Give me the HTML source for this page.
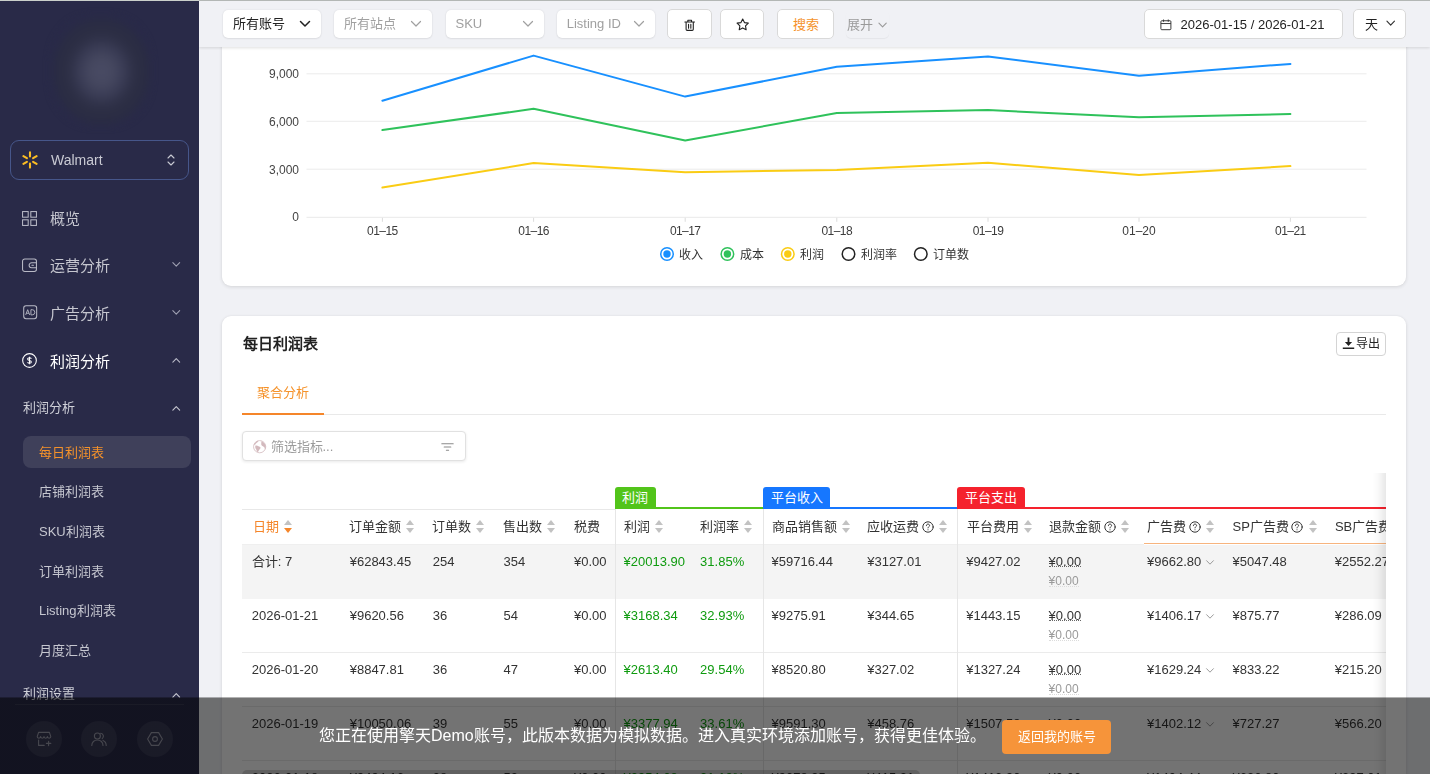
<!DOCTYPE html>
<html lang="zh-CN">
<head>
<meta charset="utf-8">
<title>每日利润表</title>
<style>
*{box-sizing:border-box;margin:0;padding:0}
html,body{width:1430px;height:774px;overflow:hidden}
body{position:relative;background:#f0f1f5;font-family:"Liberation Sans",sans-serif;font-size:13px;color:#333;-webkit-font-smoothing:antialiased;opacity:.999}
.abs{position:absolute}
svg{display:block;overflow:visible}
/* top hairline */
#topline{position:absolute;left:0;top:0;width:1430px;height:1px;background:linear-gradient(to right,#cbd0cb 0,#cbd0cb 199px,#b3b7b5 199px,#b3b7b5 100%);z-index:60}
/* ---------- sidebar ---------- */
#side{position:absolute;left:0;top:0;width:199px;height:774px;background:#292a48;z-index:20;overflow:hidden}
#logo{position:absolute;left:50px;top:15px;width:101px;height:111px;border-radius:42%;background:radial-gradient(ellipse 50% 50% at 51% 51%,#494b64 0%,#45475f 24%,#3a3c55 44%,#2f3148 62%,#2b2d43 78%,#2a2c44 92%,#292a48 100%);filter:blur(3px)}
#shop{position:absolute;left:10px;top:140px;width:179px;height:40px;border:1px solid #46568a;border-radius:9px}
#shop .nm{position:absolute;left:40px;top:0;line-height:39px;font-size:14px;color:#c9cad3}
.mi{position:absolute;left:0;width:199px;height:48px}
.mi .tx{position:absolute;left:50px;top:1px;line-height:48px;font-size:15px;color:#c6c7d0;letter-spacing:0}
.mi .ic{position:absolute;left:22px;top:17px;width:15px;height:15px}
.mi .ch{position:absolute;left:171.700px;top:20.300px;width:8.500px;height:6.800px}
.mi.on .tx{color:#fff;font-weight:500}
.sh{position:absolute;left:23px;font-size:13px;line-height:20px;color:#cfd0d8}
.si{position:absolute;left:39px;font-size:13px;line-height:20px;color:#c6c7d0}
#act{position:absolute;left:23px;top:436px;width:168px;height:32px;border-radius:8px;background:#3f405a}
.rb{position:absolute;top:721px;width:36px;height:36px;border-radius:50%;background:#3a3b57}
/* ---------- toolbar ---------- */
#bar{position:absolute;left:199px;top:0;width:1231px;height:47px;background:#f0f1f5;box-shadow:0 1px 3px rgba(0,0,0,.13);z-index:10}
.sel{position:absolute;top:10px;height:28px;width:98px;background:#fff;border-radius:5px;box-shadow:0 0 2px rgba(0,0,0,.10),0 1px 2px rgba(0,0,0,.06);font-size:13px;line-height:28px;color:#a0a0a0;padding-left:10px;white-space:nowrap}
.sel svg{position:absolute;right:10px;top:10px}
.btn{position:absolute;top:9px;height:30px;background:#fff;border:1px solid #d9d9d9;border-radius:5px;font-size:13px;line-height:29.500px;text-align:center;white-space:nowrap}
/* ---------- cards ---------- */
.card{position:absolute;left:222px;width:1184px;background:#fff;border-radius:9px;box-shadow:0 1px 4px rgba(0,0,0,.12),0 0 2px rgba(0,0,0,.06)}
#c1{top:-40px;height:326px}
#c2{top:316px;height:520px}
/* ---------- overlay ---------- */
#ov{position:absolute;left:0;top:697px;width:1430px;height:77px;background:linear-gradient(to bottom,rgba(0,0,0,.30) 0,rgba(0,0,0,.30) 1px,rgba(0,0,0,.55) 1px,rgba(0,0,0,.55) 100%);z-index:50}
#ov .t{position:absolute;left:319px;top:26px;font-size:16px;line-height:26px;color:#fff;white-space:nowrap}
#ov .b{position:absolute;left:1002px;top:23px;width:109px;height:34px;border-radius:4px;background:#f6943a;color:#fff;font-size:13px;line-height:34px;text-align:center}
.j{display:inline-block;white-space:nowrap;text-align:justify;text-align-last:justify}
</style>
</head>
<body>
<div id="topline"></div>

<!-- SIDEBAR -->
<div id="side">
  <div id="logo"></div>
  <div id="shop">
    <svg class="abs" style="left:10px;top:10px" width="18" height="18" viewBox="-9 -9 18 18" fill="none" stroke="#fbbd23" stroke-width="2.1" stroke-linecap="round">
      <path d="M0 -3.6V-7.6M0 3.6V7.6M3.1 -1.8L6.6 -3.8M3.1 1.8L6.6 3.8M-3.1 -1.8L-6.6 -3.8M-3.1 1.8L-6.6 3.8"/>
    </svg>
    <span class="nm">Walmart</span>
    <svg class="abs" style="left:156px;top:13px" width="8" height="12" viewBox="0 0 8 12" fill="none" stroke="#c9cad3" stroke-width="1.1" stroke-linecap="round" stroke-linejoin="round"><path d="M1 4L4 1L7 4M1 8L4 11L7 8"/></svg>
  </div>

  <div class="mi" style="top:194px">
    <svg class="ic" viewBox="0 0 16 16" fill="none" stroke="#b9bac6" stroke-width="1.100"><rect x="0.6" y="0.6" width="6" height="6"/><rect x="9.4" y="0.6" width="6" height="6"/><rect x="0.6" y="9.4" width="6" height="6"/><rect x="9.4" y="9.4" width="6" height="6"/></svg>
    <span class="tx"><span class="j" style="width:30.00px">概览</span></span>
  </div>
  <div class="mi" style="top:241px">
    <svg class="ic" viewBox="0 0 15 15" fill="none" stroke="#b9bac6" stroke-width="1.050" stroke-linejoin="round" stroke-linecap="round"><rect x=".55" y="1" width="13.900" height="12.500" rx="2.200"/><path d="M14.450 4.800H9.600a2.500 2.500 0 0 0 0 5h4.850"/><path d="M9.900 7.300h1.500"/></svg>
    <span class="tx"><span class="j" style="width:60.00px">运营分析</span></span>
    <svg class="ch" viewBox="0 0 10 8" fill="none" stroke="#9fa0b2" stroke-width="1.3" stroke-linecap="round" stroke-linejoin="round"><path d="M1 2L5 6L9 2"/></svg>
  </div>
  <div class="mi" style="top:289px">
    <svg class="ic" style="top:16.300px;left:22.600px;width:14.400px;height:14.400px" viewBox="0 0 16 16" fill="none" stroke="#b9bac6" stroke-width="1.150" stroke-linejoin="round"><rect x="0.8" y="0.800" width="14.400" height="14.400" rx="2.600"/><path d="M3 11L5.2 5.2L7.4 11M3.8 9.2h2.8" stroke-width="1"/><path d="M8.8 5.2v5.8h1.4a2.9 2.9 0 0 0 0-5.8z" stroke-width="1"/></svg>
    <span class="tx"><span class="j" style="width:60.00px">广告分析</span></span>
    <svg class="ch" viewBox="0 0 10 8" fill="none" stroke="#9fa0b2" stroke-width="1.3" stroke-linecap="round" stroke-linejoin="round"><path d="M1 2L5 6L9 2"/></svg>
  </div>
  <div class="mi on" style="top:337px">
    <svg class="ic" style="top:16.100px" viewBox="0 0 16 16" fill="none" stroke="#fff" stroke-width="1.150"><circle cx="8" cy="8" r="7.300"/><path d="M10 6.2C9.6 5.4 8.9 5.1 8 5.1c-1.1 0-2 .5-2 1.4 0 2 4 .9 4 3 0 .9-.9 1.4-2 1.400-.9 0-1.700-.3-2.100-1.100M8 3.900v8.200" stroke-width="1.100"/></svg>
    <span class="tx"><span class="j" style="width:60.00px">利润分析</span></span>
    <svg class="ch" viewBox="0 0 10 8" fill="none" stroke="#b9bac8" stroke-width="1.3" stroke-linecap="round" stroke-linejoin="round"><path d="M1 6L5 2L9 6"/></svg>
  </div>

  <div class="sh" style="top:398px"><span class="j" style="width:52.00px">利润分析</span></div>
  <svg class="abs" style="left:172px;top:404.500px" width="8.500" height="6.800" viewBox="0 0 10 8" fill="none" stroke="#c6c7d0" stroke-width="1.300" stroke-linecap="round" stroke-linejoin="round"><path d="M1 6L5 2L9 6"/></svg>
  <div id="act"></div>
  <div class="si" style="top:442.500px;color:#f5922a"><span class="j" style="width:65.00px">每日利润表</span></div>
  <div class="si" style="top:482px"><span class="j" style="width:65.00px">店铺利润表</span></div>
  <div class="si" style="top:522px"><span class="j" style="width:65.73px">SKU利润表</span></div>
  <div class="si" style="top:561.500px"><span class="j" style="width:65.00px">订单利润表</span></div>
  <div class="si" style="top:601px"><span class="j" style="width:76.58px">Listing利润表</span></div>
  <div class="si" style="top:641px"><span class="j" style="width:52.00px">月度汇总</span></div>
  <div class="sh" style="top:684px"><span class="j" style="width:52.00px">利润设置</span></div>
  <svg class="abs" style="left:172px;top:691.500px" width="8.500" height="6.800" viewBox="0 0 10 8" fill="none" stroke="#c6c7d0" stroke-width="1.300" stroke-linecap="round" stroke-linejoin="round"><path d="M1 6L5 2L9 6"/></svg>
  <div class="abs" style="left:15px;top:704px;width:169px;height:1px;background:#3a3b55"></div>

  <div class="rb" style="left:26px"><svg class="abs" style="left:10px;top:10px" width="16" height="16" viewBox="0 0 16 16" fill="none" stroke="#9c9dac" stroke-width="1.100" stroke-linejoin="round" stroke-linecap="round"><path d="M2.600 1.400h10.800l1.400 4.200c0 1-.8 1.600-1.700 1.600s-1.700-.7-1.700-1.600c0 1-.8 1.600-1.700 1.600S8 6.500 8 5.600c0 1-.8 1.600-1.700 1.600s-1.700-.7-1.700-1.600c0 1-.8 1.600-1.700 1.600S1.200 6.600 1.200 5.600z"/><path d="M2.600 9v5.400h5.600M12.600 10.200v4.400M10.400 12.400h4.400"/></svg></div>
  <div class="rb" style="left:81px"><svg class="abs" style="left:10px;top:10px" width="16" height="16" viewBox="0 0 16 16" fill="none" stroke="#9c9dac" stroke-width="1.100" stroke-linecap="round"><circle cx="6.400" cy="5" r="3"/><path d="M.8 14.400c0-3.200 2.400-5.400 5.600-5.400s5.600 2.200 5.600 5.400"/><path d="M9.600 2.200a3 3 0 0 1 1.600 5.400M12 9.400c1.900.8 3.200 2.600 3.200 5"/></svg></div>
  <div class="rb" style="left:137px"><svg class="abs" style="left:10px;top:10px" width="16" height="16" viewBox="0 0 16 16" fill="none" stroke="#9c9dac" stroke-width="1.100" stroke-linejoin="round"><path d="M4.400 1.600h7.200L15.400 8l-3.800 6.400H4.400L.6 8z"/><circle cx="8" cy="8" r="2.400"/></svg></div>
</div>

<!-- TOOLBAR -->
<div id="bar">
  <div class="sel" style="left:24.300px;color:#222"><span class="j" style="width:52.00px">所有账号</span><svg width="12" height="8" viewBox="0 0 12 8" fill="none" stroke="#222" stroke-width="1.500" stroke-linecap="round" stroke-linejoin="round"><path d="M1.500 1.500L6 6L10.500 1.500"/></svg></div>
  <div class="sel" style="left:135.400px"><span class="j" style="width:52.00px">所有站点</span><svg width="12" height="8" viewBox="0 0 12 8" fill="none" stroke="#a0a0a0" stroke-width="1.200" stroke-linecap="round" stroke-linejoin="round"><path d="M1.500 1.500L6 6L10.500 1.500"/></svg></div>
  <div class="sel" style="left:246.500px">SKU<svg width="12" height="8" viewBox="0 0 12 8" fill="none" stroke="#a0a0a0" stroke-width="1.200" stroke-linecap="round" stroke-linejoin="round"><path d="M1.500 1.500L6 6L10.500 1.500"/></svg></div>
  <div class="sel" style="left:357.700px">Listing ID<svg width="12" height="8" viewBox="0 0 12 8" fill="none" stroke="#a0a0a0" stroke-width="1.200" stroke-linecap="round" stroke-linejoin="round"><path d="M1.500 1.500L6 6L10.500 1.500"/></svg></div>
  <div class="btn" style="left:468px;width:45px"><svg class="abs" style="left:16px;top:9px" width="11.400" height="12.300" viewBox="0 0 13 14" fill="none" stroke="#222" stroke-width="1.250" stroke-linejoin="round" stroke-linecap="round"><path d="M1 3.400h11M4.400 3.200V1.400h4.200v1.800M2.400 3.600v8.200a1.200 1.200 0 0 0 1.200 1.200h5.800a1.200 1.200 0 0 0 1.200-1.200V3.600M5.200 6v4.600M7.800 6v4.600"/></svg></div>
  <div class="btn" style="left:521px;width:44px"><svg class="abs" style="left:14.800px;top:7.500px" width="13.400" height="13.400" viewBox="0 0 15 15" fill="none" stroke="#222" stroke-width="1.250" stroke-linejoin="round"><path d="M7.500 1.200l1.950 3.950 4.350.63-3.150 3.070.74 4.330L7.500 11.130 3.610 13.180l.74-4.330L1.200 5.780l4.350-.63z"/></svg></div>
  <div class="btn" style="left:578px;width:57px;color:#f5922a;line-height:29.500px"><span class="j" style="width:26.00px">搜索</span></div>
  <div class="abs" style="left:647px;top:10px;width:43px;height:28px;border-radius:5px;box-shadow:0 1px 1px rgba(0,0,0,.05)"></div>
  <div class="abs" style="left:648px;top:11px;line-height:28px;font-size:13px;color:#9a9a9a"><span class="j" style="width:26.00px">展开</span></div>
  <svg class="abs" style="left:679px;top:21.500px" width="9.200" height="6.400" viewBox="0 0 10 7" fill="none" stroke="#9a9a9a" stroke-width="1.200" stroke-linecap="round" stroke-linejoin="round"><path d="M1 1.200L5 5.400L9 1.200"/></svg>

  <div class="btn" style="left:944.600px;width:199px;text-align:left;color:#222"><svg class="abs" style="left:15.500px;top:8.500px" width="11.800" height="11.400" viewBox="0 0 13 13" fill="none" stroke="#333" stroke-width="1.100" stroke-linejoin="round"><rect x="0.800" y="2" width="11.400" height="10.200" rx="1"/><path d="M.8 5.200h11.400M3.800.6v2.600M9.200.6v2.600"/></svg><span class="abs" style="left:36px;top:0">2026-01-15 / 2026-01-21</span></div>
  <div class="btn" style="left:1154px;width:53px;text-align:left;color:#222"><span class="abs" style="left:11px;top:0"><span class="j" style="width:13.00px">天</span></span><svg class="abs" style="left:32px;top:10px" width="9.400" height="6.600" viewBox="0 0 10 7" fill="none" stroke="#333" stroke-width="1.200" stroke-linecap="round" stroke-linejoin="round"><path d="M1 1.200L5 5.400L9 1.200"/></svg></div>
</div>

<!-- CHART CARD -->
<div class="card" id="c1">
<!--CHART-S-->
<svg class="abs" style="left:-222px;top:40px" width="1430" height="300" viewBox="0 0 1430 300" font-family="Liberation Sans, sans-serif">
<path d="M306.500 73.8H1366.500" stroke="#ebebeb" stroke-width="1"/>
<path d="M306.500 121.3H1366.500" stroke="#ebebeb" stroke-width="1"/>
<path d="M306.500 169.2H1366.500" stroke="#ebebeb" stroke-width="1"/>
<path d="M306.500 217.300H1366.500" stroke="#e9e9e9" stroke-width="1"/>
<path d="M382.4 217.800v4 M533.6 217.800v4 M685.2 217.800v4 M836.8 217.800v4 M988.0 217.800v4 M1139.0 217.800v4 M1290.4 217.800v4" stroke="#dcdcdc" stroke-width="1"/>
<text x="299" y="78.1" font-size="12" fill="#444" text-anchor="end">9,000</text>
<text x="299" y="125.8" font-size="12" fill="#444" text-anchor="end">6,000</text>
<text x="299" y="173.6" font-size="12" fill="#444" text-anchor="end">3,000</text>
<text x="299" y="221.3" font-size="12" fill="#444" text-anchor="end">0</text>
<text x="382.4" y="235.300" font-size="12" fill="#3c3c3c" text-anchor="middle" letter-spacing="-0.55">01–15</text>
<text x="533.6" y="235.300" font-size="12" fill="#3c3c3c" text-anchor="middle" letter-spacing="-0.55">01–16</text>
<text x="685.2" y="235.300" font-size="12" fill="#3c3c3c" text-anchor="middle" letter-spacing="-0.55">01–17</text>
<text x="836.8" y="235.300" font-size="12" fill="#3c3c3c" text-anchor="middle" letter-spacing="-0.55">01–18</text>
<text x="988.0" y="235.300" font-size="12" fill="#3c3c3c" text-anchor="middle" letter-spacing="-0.55">01–19</text>
<text x="1139.0" y="235.300" font-size="12" fill="#3c3c3c" text-anchor="middle" letter-spacing="0">01–20</text>
<text x="1290.4" y="235.300" font-size="12" fill="#3c3c3c" text-anchor="middle" letter-spacing="-0.55">01–21</text>
<polyline points="382.4,100.7 533.6,55.6 685.2,96.6 836.8,66.8 988.0,56.5 1139.0,75.8 1290.4,63.9" fill="none" stroke="#1890ff" stroke-width="2" stroke-linejoin="round" stroke-linecap="round"/>
<polyline points="382.4,130.1 533.6,108.8 685.2,140.5 836.8,113.0 988.0,110.1 1139.0,117.2 1290.4,114.1" fill="none" stroke="#2fc25b" stroke-width="2" stroke-linejoin="round" stroke-linecap="round"/>
<polyline points="382.4,187.6 533.6,163.1 685.2,172.2 836.8,169.9 988.0,162.8 1139.0,174.9 1290.4,166.1" fill="none" stroke="#facc14" stroke-width="2" stroke-linejoin="round" stroke-linecap="round"/>
<circle cx="667" cy="254" r="6.250" fill="#fff" stroke="#1890ff" stroke-width="1.500"/>
<circle cx="667" cy="254" r="3.700" fill="#1890ff"/>
<text textLength="24.00" lengthAdjust="spacing" x="679.2" y="258.800" font-size="12" fill="#333">收入</text>
<circle cx="727.4" cy="254" r="6.250" fill="#fff" stroke="#2fc25b" stroke-width="1.500"/>
<circle cx="727.4" cy="254" r="3.700" fill="#2fc25b"/>
<text textLength="24.00" lengthAdjust="spacing" x="739.6" y="258.800" font-size="12" fill="#333">成本</text>
<circle cx="787.8" cy="254" r="6.250" fill="#fff" stroke="#facc14" stroke-width="1.500"/>
<circle cx="787.8" cy="254" r="3.700" fill="#facc14"/>
<text textLength="24.00" lengthAdjust="spacing" x="800.0" y="258.800" font-size="12" fill="#333">利润</text>
<circle cx="848.5" cy="254" r="6.250" fill="#fff" stroke="#222" stroke-width="1.500"/>
<text textLength="36.00" lengthAdjust="spacing" x="860.7" y="258.800" font-size="12" fill="#333">利润率</text>
<circle cx="920.8" cy="254" r="6.250" fill="#fff" stroke="#222" stroke-width="1.500"/>
<text textLength="36.00" lengthAdjust="spacing" x="933.0" y="258.800" font-size="12" fill="#333">订单数</text>
</svg>
<!--CHART-E-->
</div>

<!-- TABLE CARD -->
<div class="card" id="c2">
<!--TABLE-S-->
<div class="abs" id="tb" style="left:-222px;top:-316px;width:1430px;height:900px">
<div class="abs" style="left:242.500px;top:334px;font-size:15px;line-height:20px;font-weight:bold;color:#222"><span class="j" style="width:75.00px">每日利润表</span></div>
<div class="abs" style="left:1336px;top:332px;width:50px;height:24px;border:1px solid #d4d4d4;border-radius:4px;background:#fff"><svg class="abs" style="left:5px;top:4px" width="13" height="13" viewBox="0 0 13 13" fill="#222"><path d="M5.600.4h1.800v4.600h2.700L6.500 9.100 2.900 5h2.700zM.8 10.600h11.400v1.300H.8z"/></svg><span class="abs" style="left:19.200px;top:0;line-height:22.500px;font-size:12px;color:#222"><span class="j" style="width:24.00px">导出</span></span></div>
<div class="abs" style="left:257px;top:383px;font-size:13px;line-height:20px;font-weight:500;color:#f5922a"><span class="j" style="width:52.00px">聚合分析</span></div>
<div class="abs" style="left:242px;top:414px;width:1144px;height:1px;background:#e9e9e9"></div>
<div class="abs" style="left:242px;top:412.500px;width:82px;height:2px;background:#f5862a"></div>
<div class="abs" style="left:242px;top:431px;width:224px;height:30px;border:1px solid #e1e1e1;border-radius:4px;background:#fff;box-shadow:0 1px 3px rgba(0,0,0,.09)"><svg class="abs" style="left:9.900px;top:8px" width="13.300" height="13.400" viewBox="0 0 100 100"><circle cx="50" cy="50" r="46" fill="none" stroke="#d6bfc3" stroke-width="6.500"/><path d="M17 43C23 38 35 40 41 46C49 48 59 52 57 60C53 68 45 74 41 84C37 93 28 91 28 82C28 72 19 66 17 56Z" fill="#d3b9bd"/><path d="M63 9C77 13 93 28 96 48C97 58 95 66 90 72C89 62 87 52 77 48C69 44 60 37 62 27Z" fill="#d3b9bd"/><path d="M7 34C12 21 25 9 40 5L37 15C29 19 19 27 15 38Z" fill="#d3b9bd"/></svg><span class="abs" style="left:27.500px;top:0;line-height:29px;font-size:13px;color:#9b9b9b"><span class="j" style="width:62.84px">筛选指标...</span></span><svg class="abs" style="left:198px;top:11px" width="13" height="8" viewBox="0 0 13 8" fill="none" stroke="#8a8a8a" stroke-width="1.100" stroke-linecap="round"><path d="M.8.800h11.400M3.200 4h6.600M5.400 7.200h2.200"/></svg></div>
<div class="abs" style="left:615px;top:507px;width:148px;height:2px;background:#52c41a"></div>
<div class="abs" style="left:615px;top:487px;width:40.5px;height:21px;background:#52c41a;border-radius:3px 3px 0 0;color:#fff;font-size:13px;font-weight:500;line-height:21px;text-align:center;white-space:nowrap"><span class="j" style="width:26.00px">利润</span></div>
<div class="abs" style="left:763px;top:507px;width:194px;height:2px;background:#1677ff"></div>
<div class="abs" style="left:763px;top:487px;width:67px;height:21px;background:#1677ff;border-radius:3px 3px 0 0;color:#fff;font-size:13px;font-weight:500;line-height:21px;text-align:center;white-space:nowrap"><span class="j" style="width:52.00px">平台收入</span></div>
<div class="abs" style="left:957px;top:507px;width:429px;height:2px;background:#f5222d"></div>
<div class="abs" style="left:957px;top:487px;width:68px;height:21px;background:#f5222d;border-radius:3px 3px 0 0;color:#fff;font-size:13px;font-weight:500;line-height:21px;text-align:center;white-space:nowrap"><span class="j" style="width:52.00px">平台支出</span></div>
<div class="abs" style="left:242px;top:509px;width:373px;height:1px;background:#e8e8e8"></div>
<div class="abs" style="left:242px;top:544.500px;width:1144px;height:54.300px;background:#f4f4f4"></div>
<div class="abs" style="left:242px;top:652px;width:1144px;height:1px;background:#ebebeb"></div>
<div class="abs" style="left:242px;top:706px;width:1144px;height:1px;background:#ebebeb"></div>
<div class="abs" style="left:242px;top:760px;width:1144px;height:1px;background:#ebebeb"></div>
<div class="abs" style="left:242px;top:544px;width:902px;height:1px;background:#efefef"></div>
<div class="abs" style="left:1144px;top:543px;width:242px;height:1px;background:#f7b47e"></div>
<div class="abs" style="left:615px;top:509px;width:1px;height:400px;background:#e6e6e6"></div>
<div class="abs" style="left:763px;top:509px;width:1px;height:400px;background:#e6e6e6"></div>
<div class="abs" style="left:957px;top:509px;width:1px;height:400px;background:#e6e6e6"></div>
<div class="abs" id="thd" style="left:0;top:0;width:1386px;height:900px;overflow:hidden">
<span class="abs" style="left:252.8px;top:516.500px;height:20px;line-height:20px;font-size:13px;color:#f5862a;white-space:nowrap"><span class="j" style="width:26.00px">日期</span><svg style="display:inline-block;vertical-align:top;margin:3px 0 0 5px" width="8" height="13" viewBox="0 0 8 13"><path d="M4 0L8 5H0z" fill="#c2c2c2"/><path d="M4 13L8 8H0z" fill="#f5862a"/></svg></span>
<span class="abs" style="left:349.2px;top:516.500px;height:20px;line-height:20px;font-size:13px;color:#333;white-space:nowrap"><span class="j" style="width:52.00px">订单金额</span><svg style="display:inline-block;vertical-align:top;margin:3px 0 0 5px" width="8" height="13" viewBox="0 0 8 13"><path d="M4 0L8 5H0z" fill="#c2c2c2"/><path d="M4 13L8 8H0z" fill="#c2c2c2"/></svg></span>
<span class="abs" style="left:432.3px;top:516.500px;height:20px;line-height:20px;font-size:13px;color:#333;white-space:nowrap"><span class="j" style="width:39.00px">订单数</span><svg style="display:inline-block;vertical-align:top;margin:3px 0 0 5px" width="8" height="13" viewBox="0 0 8 13"><path d="M4 0L8 5H0z" fill="#c2c2c2"/><path d="M4 13L8 8H0z" fill="#c2c2c2"/></svg></span>
<span class="abs" style="left:503.1px;top:516.500px;height:20px;line-height:20px;font-size:13px;color:#333;white-space:nowrap"><span class="j" style="width:39.00px">售出数</span><svg style="display:inline-block;vertical-align:top;margin:3px 0 0 5px" width="8" height="13" viewBox="0 0 8 13"><path d="M4 0L8 5H0z" fill="#c2c2c2"/><path d="M4 13L8 8H0z" fill="#c2c2c2"/></svg></span>
<span class="abs" style="left:574px;top:516.500px;height:20px;line-height:20px;font-size:13px;color:#333;white-space:nowrap"><span class="j" style="width:26.00px">税费</span></span>
<span class="abs" style="left:623.8px;top:516.500px;height:20px;line-height:20px;font-size:13px;color:#333;white-space:nowrap"><span class="j" style="width:26.00px">利润</span><svg style="display:inline-block;vertical-align:top;margin:3px 0 0 5px" width="8" height="13" viewBox="0 0 8 13"><path d="M4 0L8 5H0z" fill="#c2c2c2"/><path d="M4 13L8 8H0z" fill="#c2c2c2"/></svg></span>
<span class="abs" style="left:700.1px;top:516.500px;height:20px;line-height:20px;font-size:13px;color:#333;white-space:nowrap"><span class="j" style="width:39.00px">利润率</span><svg style="display:inline-block;vertical-align:top;margin:3px 0 0 5px" width="8" height="13" viewBox="0 0 8 13"><path d="M4 0L8 5H0z" fill="#c2c2c2"/><path d="M4 13L8 8H0z" fill="#c2c2c2"/></svg></span>
<span class="abs" style="left:771.5px;top:516.500px;height:20px;line-height:20px;font-size:13px;color:#333;white-space:nowrap"><span class="j" style="width:65.00px">商品销售额</span><svg style="display:inline-block;vertical-align:top;margin:3px 0 0 5px" width="8" height="13" viewBox="0 0 8 13"><path d="M4 0L8 5H0z" fill="#c2c2c2"/><path d="M4 13L8 8H0z" fill="#c2c2c2"/></svg></span>
<span class="abs" style="left:867.2px;top:516.500px;height:20px;line-height:20px;font-size:13px;color:#333;white-space:nowrap"><span class="j" style="width:52.00px">应收运费</span><svg style="display:inline-block;vertical-align:top;margin:4px 0 0 2.500px" width="12" height="12" viewBox="0 0 12 12" fill="none" stroke="#333" stroke-linecap="round"><circle cx="6" cy="6" r="5.200" stroke-width="1"/><path d="M4.400 4.700c0-1 .7-1.600 1.600-1.600s1.600.6 1.600 1.400c0 1.100-1.600 1.200-1.600 2.400" stroke-width="1"/><circle cx="6" cy="8.700" r=".55" fill="#333" stroke="none"/></svg><svg style="display:inline-block;vertical-align:top;margin:3px 0 0 5.5px" width="8" height="13" viewBox="0 0 8 13"><path d="M4 0L8 5H0z" fill="#c2c2c2"/><path d="M4 13L8 8H0z" fill="#c2c2c2"/></svg></span>
<span class="abs" style="left:966.7px;top:516.500px;height:20px;line-height:20px;font-size:13px;color:#333;white-space:nowrap"><span class="j" style="width:52.00px">平台费用</span><svg style="display:inline-block;vertical-align:top;margin:3px 0 0 5px" width="8" height="13" viewBox="0 0 8 13"><path d="M4 0L8 5H0z" fill="#c2c2c2"/><path d="M4 13L8 8H0z" fill="#c2c2c2"/></svg></span>
<span class="abs" style="left:1049px;top:516.500px;height:20px;line-height:20px;font-size:13px;color:#333;white-space:nowrap"><span class="j" style="width:52.00px">退款金额</span><svg style="display:inline-block;vertical-align:top;margin:4px 0 0 2.500px" width="12" height="12" viewBox="0 0 12 12" fill="none" stroke="#333" stroke-linecap="round"><circle cx="6" cy="6" r="5.200" stroke-width="1"/><path d="M4.400 4.700c0-1 .7-1.600 1.600-1.600s1.600.6 1.600 1.400c0 1.100-1.600 1.200-1.600 2.400" stroke-width="1"/><circle cx="6" cy="8.700" r=".55" fill="#333" stroke="none"/></svg><svg style="display:inline-block;vertical-align:top;margin:3px 0 0 5.5px" width="8" height="13" viewBox="0 0 8 13"><path d="M4 0L8 5H0z" fill="#c2c2c2"/><path d="M4 13L8 8H0z" fill="#c2c2c2"/></svg></span>
<span class="abs" style="left:1147.2px;top:516.500px;height:20px;line-height:20px;font-size:13px;color:#333;white-space:nowrap"><span class="j" style="width:39.00px">广告费</span><svg style="display:inline-block;vertical-align:top;margin:4px 0 0 2.500px" width="12" height="12" viewBox="0 0 12 12" fill="none" stroke="#333" stroke-linecap="round"><circle cx="6" cy="6" r="5.200" stroke-width="1"/><path d="M4.400 4.700c0-1 .7-1.600 1.600-1.600s1.600.6 1.600 1.400c0 1.100-1.600 1.200-1.600 2.400" stroke-width="1"/><circle cx="6" cy="8.700" r=".55" fill="#333" stroke="none"/></svg><svg style="display:inline-block;vertical-align:top;margin:3px 0 0 5.5px" width="8" height="13" viewBox="0 0 8 13"><path d="M4 0L8 5H0z" fill="#c2c2c2"/><path d="M4 13L8 8H0z" fill="#c2c2c2"/></svg></span>
<span class="abs" style="left:1232.6px;top:516.500px;height:20px;line-height:20px;font-size:13px;color:#333;white-space:nowrap"><span class="j" style="width:56.34px">SP广告费</span><svg style="display:inline-block;vertical-align:top;margin:4px 0 0 2.500px" width="12" height="12" viewBox="0 0 12 12" fill="none" stroke="#333" stroke-linecap="round"><circle cx="6" cy="6" r="5.200" stroke-width="1"/><path d="M4.400 4.700c0-1 .7-1.600 1.600-1.600s1.600.6 1.600 1.400c0 1.100-1.600 1.200-1.600 2.400" stroke-width="1"/><circle cx="6" cy="8.700" r=".55" fill="#333" stroke="none"/></svg><svg style="display:inline-block;vertical-align:top;margin:3px 0 0 5.5px" width="8" height="13" viewBox="0 0 8 13"><path d="M4 0L8 5H0z" fill="#c2c2c2"/><path d="M4 13L8 8H0z" fill="#c2c2c2"/></svg></span>
<span class="abs" style="left:1334.9px;top:516.500px;height:20px;line-height:20px;font-size:13px;color:#333;white-space:nowrap"><span class="j" style="width:56.34px">SB广告费</span><svg style="display:inline-block;vertical-align:top;margin:4px 0 0 2.500px" width="12" height="12" viewBox="0 0 12 12" fill="none" stroke="#333" stroke-linecap="round"><circle cx="6" cy="6" r="5.200" stroke-width="1"/><path d="M4.400 4.700c0-1 .7-1.600 1.600-1.600s1.600.6 1.600 1.400c0 1.100-1.600 1.200-1.600 2.400" stroke-width="1"/><circle cx="6" cy="8.700" r=".55" fill="#333" stroke="none"/></svg><svg style="display:inline-block;vertical-align:top;margin:3px 0 0 5.5px" width="8" height="13" viewBox="0 0 8 13"><path d="M4 0L8 5H0z" fill="#c2c2c2"/><path d="M4 13L8 8H0z" fill="#c2c2c2"/></svg></span>
<span class="abs" style="left:251.8px;top:552px;line-height:20px;font-size:13px;color:#333;white-space:nowrap"><span class="j" style="width:40.47px">合计: 7</span></span>
<span class="abs" style="left:349.7px;top:552px;line-height:20px;font-size:13px;color:#333;white-space:nowrap">¥62843.45</span>
<span class="abs" style="left:432.8px;top:552px;line-height:20px;font-size:13px;color:#333;white-space:nowrap">254</span>
<span class="abs" style="left:503.6px;top:552px;line-height:20px;font-size:13px;color:#333;white-space:nowrap">354</span>
<span class="abs" style="left:574px;top:552px;line-height:20px;font-size:13px;color:#333;white-space:nowrap">¥0.00</span>
<span class="abs" style="left:623.5px;top:552px;line-height:20px;font-size:13px;color:#0f9b0f;white-space:nowrap">¥20013.90</span>
<span class="abs" style="left:700.1px;top:552px;line-height:20px;font-size:13px;color:#0f9b0f;white-space:nowrap">31.85%</span>
<span class="abs" style="left:771.5px;top:552px;line-height:20px;font-size:13px;color:#333;white-space:nowrap">¥59716.44</span>
<span class="abs" style="left:867.2px;top:552px;line-height:20px;font-size:13px;color:#333;white-space:nowrap">¥3127.01</span>
<span class="abs" style="left:966.2px;top:552px;line-height:20px;font-size:13px;color:#333;white-space:nowrap">¥9427.02</span>
<span class="abs" style="left:1048.6px;top:552px;line-height:20px;font-size:13px;color:#333;white-space:nowrap;border-bottom:1px dotted #666;height:15.500px;line-height:19px;top:551.5px">¥0.00</span>
<span class="abs" style="left:1048.6px;top:573px;font-size:12px;color:#9a9a9a;white-space:nowrap;border-bottom:1px dotted #dcdcdc;height:13.500px;line-height:17px">¥0.00</span>
<span class="abs" style="left:1147px;top:552px;line-height:20px;font-size:13px;color:#333;white-space:nowrap">¥9662.80</span>
<svg class="abs" style="left:1206px;top:559.5px" width="8" height="5" viewBox="0 0 8 5" fill="none" stroke="#9a9a9a" stroke-width="1" stroke-linecap="round" stroke-linejoin="round"><path d="M.6.700L4 4.200L7.400.7"/></svg>
<span class="abs" style="left:1232.5px;top:552px;line-height:20px;font-size:13px;color:#333;white-space:nowrap">¥5047.48</span>
<span class="abs" style="left:1334.8px;top:552px;line-height:20px;font-size:13px;color:#333;white-space:nowrap">¥2552.27</span>
<span class="abs" style="left:251.8px;top:606px;line-height:20px;font-size:13px;color:#333;white-space:nowrap">2026-01-21</span>
<span class="abs" style="left:349.7px;top:606px;line-height:20px;font-size:13px;color:#333;white-space:nowrap">¥9620.56</span>
<span class="abs" style="left:432.8px;top:606px;line-height:20px;font-size:13px;color:#333;white-space:nowrap">36</span>
<span class="abs" style="left:503.6px;top:606px;line-height:20px;font-size:13px;color:#333;white-space:nowrap">54</span>
<span class="abs" style="left:574px;top:606px;line-height:20px;font-size:13px;color:#333;white-space:nowrap">¥0.00</span>
<span class="abs" style="left:623.5px;top:606px;line-height:20px;font-size:13px;color:#0f9b0f;white-space:nowrap">¥3168.34</span>
<span class="abs" style="left:700.1px;top:606px;line-height:20px;font-size:13px;color:#0f9b0f;white-space:nowrap">32.93%</span>
<span class="abs" style="left:771.5px;top:606px;line-height:20px;font-size:13px;color:#333;white-space:nowrap">¥9275.91</span>
<span class="abs" style="left:867.2px;top:606px;line-height:20px;font-size:13px;color:#333;white-space:nowrap">¥344.65</span>
<span class="abs" style="left:966.2px;top:606px;line-height:20px;font-size:13px;color:#333;white-space:nowrap">¥1443.15</span>
<span class="abs" style="left:1048.6px;top:606px;line-height:20px;font-size:13px;color:#333;white-space:nowrap;border-bottom:1px dotted #666;height:15.500px;line-height:19px;top:605.5px">¥0.00</span>
<span class="abs" style="left:1048.6px;top:627px;font-size:12px;color:#9a9a9a;white-space:nowrap;border-bottom:1px dotted #dcdcdc;height:13.500px;line-height:17px">¥0.00</span>
<span class="abs" style="left:1147px;top:606px;line-height:20px;font-size:13px;color:#333;white-space:nowrap">¥1406.17</span>
<svg class="abs" style="left:1206px;top:613.5px" width="8" height="5" viewBox="0 0 8 5" fill="none" stroke="#9a9a9a" stroke-width="1" stroke-linecap="round" stroke-linejoin="round"><path d="M.6.700L4 4.200L7.400.7"/></svg>
<span class="abs" style="left:1232.5px;top:606px;line-height:20px;font-size:13px;color:#333;white-space:nowrap">¥875.77</span>
<span class="abs" style="left:1334.8px;top:606px;line-height:20px;font-size:13px;color:#333;white-space:nowrap">¥286.09</span>
<span class="abs" style="left:251.8px;top:660px;line-height:20px;font-size:13px;color:#333;white-space:nowrap">2026-01-20</span>
<span class="abs" style="left:349.7px;top:660px;line-height:20px;font-size:13px;color:#333;white-space:nowrap">¥8847.81</span>
<span class="abs" style="left:432.8px;top:660px;line-height:20px;font-size:13px;color:#333;white-space:nowrap">36</span>
<span class="abs" style="left:503.6px;top:660px;line-height:20px;font-size:13px;color:#333;white-space:nowrap">47</span>
<span class="abs" style="left:574px;top:660px;line-height:20px;font-size:13px;color:#333;white-space:nowrap">¥0.00</span>
<span class="abs" style="left:623.5px;top:660px;line-height:20px;font-size:13px;color:#0f9b0f;white-space:nowrap">¥2613.40</span>
<span class="abs" style="left:700.1px;top:660px;line-height:20px;font-size:13px;color:#0f9b0f;white-space:nowrap">29.54%</span>
<span class="abs" style="left:771.5px;top:660px;line-height:20px;font-size:13px;color:#333;white-space:nowrap">¥8520.80</span>
<span class="abs" style="left:867.2px;top:660px;line-height:20px;font-size:13px;color:#333;white-space:nowrap">¥327.02</span>
<span class="abs" style="left:966.2px;top:660px;line-height:20px;font-size:13px;color:#333;white-space:nowrap">¥1327.24</span>
<span class="abs" style="left:1048.6px;top:660px;line-height:20px;font-size:13px;color:#333;white-space:nowrap;border-bottom:1px dotted #666;height:15.500px;line-height:19px;top:659.5px">¥0.00</span>
<span class="abs" style="left:1048.6px;top:681px;font-size:12px;color:#9a9a9a;white-space:nowrap;border-bottom:1px dotted #dcdcdc;height:13.500px;line-height:17px">¥0.00</span>
<span class="abs" style="left:1147px;top:660px;line-height:20px;font-size:13px;color:#333;white-space:nowrap">¥1629.24</span>
<svg class="abs" style="left:1206px;top:667.5px" width="8" height="5" viewBox="0 0 8 5" fill="none" stroke="#9a9a9a" stroke-width="1" stroke-linecap="round" stroke-linejoin="round"><path d="M.6.700L4 4.200L7.400.7"/></svg>
<span class="abs" style="left:1232.5px;top:660px;line-height:20px;font-size:13px;color:#333;white-space:nowrap">¥833.22</span>
<span class="abs" style="left:1334.8px;top:660px;line-height:20px;font-size:13px;color:#333;white-space:nowrap">¥215.20</span>
<span class="abs" style="left:251.8px;top:714px;line-height:20px;font-size:13px;color:#333;white-space:nowrap">2026-01-19</span>
<span class="abs" style="left:349.7px;top:714px;line-height:20px;font-size:13px;color:#333;white-space:nowrap">¥10050.06</span>
<span class="abs" style="left:432.8px;top:714px;line-height:20px;font-size:13px;color:#333;white-space:nowrap">39</span>
<span class="abs" style="left:503.6px;top:714px;line-height:20px;font-size:13px;color:#333;white-space:nowrap">55</span>
<span class="abs" style="left:574px;top:714px;line-height:20px;font-size:13px;color:#333;white-space:nowrap">¥0.00</span>
<span class="abs" style="left:623.5px;top:714px;line-height:20px;font-size:13px;color:#0f9b0f;white-space:nowrap">¥3377.94</span>
<span class="abs" style="left:700.1px;top:714px;line-height:20px;font-size:13px;color:#0f9b0f;white-space:nowrap">33.61%</span>
<span class="abs" style="left:771.5px;top:714px;line-height:20px;font-size:13px;color:#333;white-space:nowrap">¥9591.30</span>
<span class="abs" style="left:867.2px;top:714px;line-height:20px;font-size:13px;color:#333;white-space:nowrap">¥458.76</span>
<span class="abs" style="left:966.2px;top:714px;line-height:20px;font-size:13px;color:#333;white-space:nowrap">¥1507.58</span>
<span class="abs" style="left:1048.6px;top:714px;line-height:20px;font-size:13px;color:#333;white-space:nowrap;border-bottom:1px dotted #666;height:15.500px;line-height:19px;top:713.5px">¥0.00</span>
<span class="abs" style="left:1048.6px;top:735px;font-size:12px;color:#9a9a9a;white-space:nowrap;border-bottom:1px dotted #dcdcdc;height:13.500px;line-height:17px">¥0.00</span>
<span class="abs" style="left:1147px;top:714px;line-height:20px;font-size:13px;color:#333;white-space:nowrap">¥1402.12</span>
<svg class="abs" style="left:1206px;top:721.5px" width="8" height="5" viewBox="0 0 8 5" fill="none" stroke="#9a9a9a" stroke-width="1" stroke-linecap="round" stroke-linejoin="round"><path d="M.6.700L4 4.200L7.400.7"/></svg>
<span class="abs" style="left:1232.5px;top:714px;line-height:20px;font-size:13px;color:#333;white-space:nowrap">¥727.27</span>
<span class="abs" style="left:1334.8px;top:714px;line-height:20px;font-size:13px;color:#333;white-space:nowrap">¥566.20</span>
<span class="abs" style="left:251.8px;top:768px;line-height:20px;font-size:13px;color:#333;white-space:nowrap">2026-01-18</span>
<span class="abs" style="left:349.7px;top:768px;line-height:20px;font-size:13px;color:#333;white-space:nowrap">¥9494.16</span>
<span class="abs" style="left:432.8px;top:768px;line-height:20px;font-size:13px;color:#333;white-space:nowrap">38</span>
<span class="abs" style="left:503.6px;top:768px;line-height:20px;font-size:13px;color:#333;white-space:nowrap">53</span>
<span class="abs" style="left:574px;top:768px;line-height:20px;font-size:13px;color:#333;white-space:nowrap">¥0.00</span>
<span class="abs" style="left:623.5px;top:768px;line-height:20px;font-size:13px;color:#0f9b0f;white-space:nowrap">¥2954.68</span>
<span class="abs" style="left:700.1px;top:768px;line-height:20px;font-size:13px;color:#0f9b0f;white-space:nowrap">31.12%</span>
<span class="abs" style="left:771.5px;top:768px;line-height:20px;font-size:13px;color:#333;white-space:nowrap">¥9078.95</span>
<span class="abs" style="left:867.2px;top:768px;line-height:20px;font-size:13px;color:#333;white-space:nowrap">¥415.21</span>
<span class="abs" style="left:966.2px;top:768px;line-height:20px;font-size:13px;color:#333;white-space:nowrap">¥1412.90</span>
<span class="abs" style="left:1048.6px;top:768px;line-height:20px;font-size:13px;color:#333;white-space:nowrap;border-bottom:1px dotted #666;height:15.500px;line-height:19px;top:767.5px">¥0.00</span>
<span class="abs" style="left:1048.6px;top:789px;font-size:12px;color:#9a9a9a;white-space:nowrap;border-bottom:1px dotted #dcdcdc;height:13.500px;line-height:17px">¥0.00</span>
<span class="abs" style="left:1147px;top:768px;line-height:20px;font-size:13px;color:#333;white-space:nowrap">¥1404.44</span>
<svg class="abs" style="left:1206px;top:775.5px" width="8" height="5" viewBox="0 0 8 5" fill="none" stroke="#9a9a9a" stroke-width="1" stroke-linecap="round" stroke-linejoin="round"><path d="M.6.700L4 4.200L7.400.7"/></svg>
<span class="abs" style="left:1232.5px;top:768px;line-height:20px;font-size:13px;color:#333;white-space:nowrap">¥636.80</span>
<span class="abs" style="left:1334.8px;top:768px;line-height:20px;font-size:13px;color:#333;white-space:nowrap">¥397.01</span>
</div>
<div class="abs" style="left:1372px;top:473px;width:14px;height:400px;background:linear-gradient(to right,rgba(0,0,0,0) 0%,rgba(0,0,0,.02) 40%,rgba(0,0,0,.09) 100%)"></div>
<div class="abs" style="left:242px;top:770px;width:678px;height:10px;border-radius:5px;background:rgba(0,0,0,.17)"></div>
</div>
<!--TABLE-E-->
</div>

<!-- OVERLAY -->
<div id="ov">
  <div class="t"><span class="j" style="width:666.69px">您正在使用擎天Demo账号，此版本数据为模拟数据。进入真实环境添加账号，获得更佳体验。</span></div>
  <div class="b"><span class="j" style="width:78.00px">返回我的账号</span></div>
</div>
</body>
</html>
